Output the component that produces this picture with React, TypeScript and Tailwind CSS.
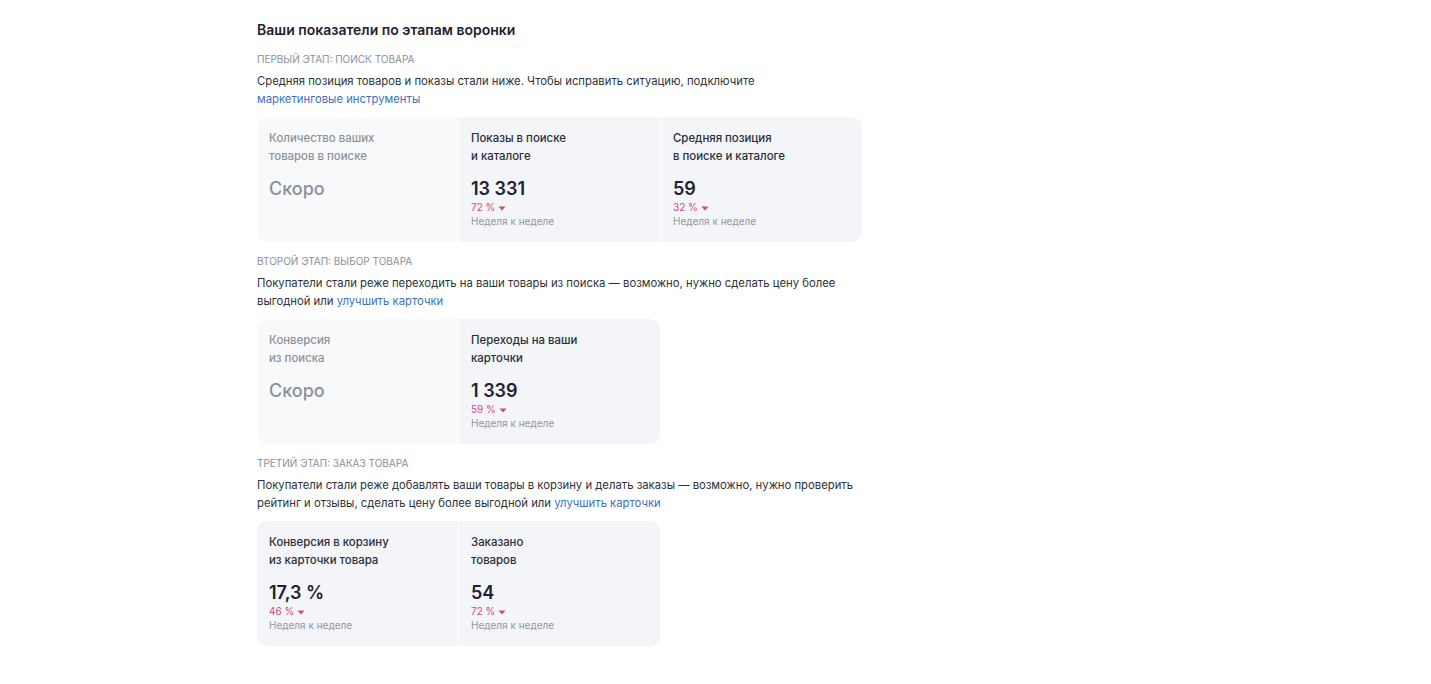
import type { ReactNode } from 'react';

type Metric = {
  label: [string, string];
  value?: string;
  change?: string;
  soon?: boolean;
  light?: boolean;
};

type Stage = {
  title: string;
  text: ReactNode;
  metrics: Metric[];
};

const Link = ({ children }: { children: ReactNode }) => (
  <span className="inline-block text-[#3d71c4]">{children}</span>
);

const stages: Stage[] = [
  {
    title: 'Первый этап: поиск товара',
    text: (
      <>
        Средняя позиция товаров и показы стали ниже. Чтобы исправить ситуацию, подключите{' '}
        <Link>маркетинговые инструменты</Link>
      </>
    ),
    metrics: [
      { label: ['Количество ваших', 'товаров в поиске'], soon: true, light: true },
      { label: ['Показы в поиске', 'и каталоге'], value: '13 331', change: '72 %' },
      { label: ['Средняя позиция', 'в поиске и каталоге'], value: '59', change: '32 %' },
    ],
  },
  {
    title: 'Второй этап: выбор товара',
    text: (
      <>
        Покупатели стали реже переходить на ваши товары из поиска — возможно, нужно сделать цену более
        выгодной или <Link>улучшить карточки</Link>
      </>
    ),
    metrics: [
      { label: ['Конверсия', 'из поиска'], soon: true, light: true },
      { label: ['Переходы на ваши', 'карточки'], value: '1 339', change: '59 %' },
    ],
  },
  {
    title: 'Третий этап: заказ товара',
    text: (
      <>
        Покупатели стали реже добавлять ваши товары в корзину и делать заказы — возможно, нужно проверить
        рейтинг и отзывы, сделать цену более выгодной или <Link>улучшить карточки</Link>
      </>
    ),
    metrics: [
      { label: ['Конверсия в корзину', 'из карточки товара'], value: '17,3 %', change: '46 %' },
      { label: ['Заказано', 'товаров'], value: '54', change: '72 %' },
    ],
  },
];

function MetricCell({ m }: { m: Metric }) {
  return (
    <div className={`w-[201px] h-[125px] px-3 pt-3 ${m.light ? 'bg-[#f8f9fb]' : 'bg-[#f3f5f8]'}`}>
      <div
        className={`text-[11.4px] leading-[18px] font-medium ${m.soon ? 'text-[#8d919a]' : 'text-[#2a2e38]'}`}
      >
        {m.label[0]}
        <br />
        {m.label[1]}
      </div>
      {m.soon ? (
        <div className="mt-3 text-[18px] leading-6 font-medium text-[#8b8f98]">Скоро</div>
      ) : (
        <>
          <div className="mt-3 text-[18px] leading-6 font-semibold text-[#1d2130]">{m.value}</div>
          <div className="flex items-center gap-[3px] text-[10px] leading-[13px] text-[#d8457a]">
            {m.change}
            <svg width="8" height="5" viewBox="0 0 8 5" className="mt-[1px]">
              <path d="M0.5 0.5h7L4 4.5z" fill="#d8457a" />
            </svg>
          </div>
          <div className="text-[10px] leading-[14px] text-[#92959d]">Неделя к неделе</div>
        </>
      )}
    </div>
  );
}

export default function App() {
  return (
    <div
      className="min-h-screen bg-white pl-[257px] pt-5 text-[#22252f]"
      style={{ fontFamily: 'Inter, "Noto Sans", sans-serif' }}
    >
      <h1 className="text-[14px] leading-5 font-semibold text-[#1f2230]">Ваши показатели по этапам воронки</h1>
      {stages.map((s) => (
        <section key={s.title} className="mt-3">
          <div className="text-[10px] leading-[14px] uppercase text-[#8a8e97]">{s.title}</div>
          <p className="mt-[6px] w-[605px] text-[11.3px] leading-[18px] text-[#2e323c]">{s.text}</p>
          <div className="mt-[9px] flex w-fit gap-[1px] overflow-hidden rounded-[10px]">
            {s.metrics.map((m) => (
              <MetricCell key={m.label[0]} m={m} />
            ))}
          </div>
        </section>
      ))}
    </div>
  );
}
